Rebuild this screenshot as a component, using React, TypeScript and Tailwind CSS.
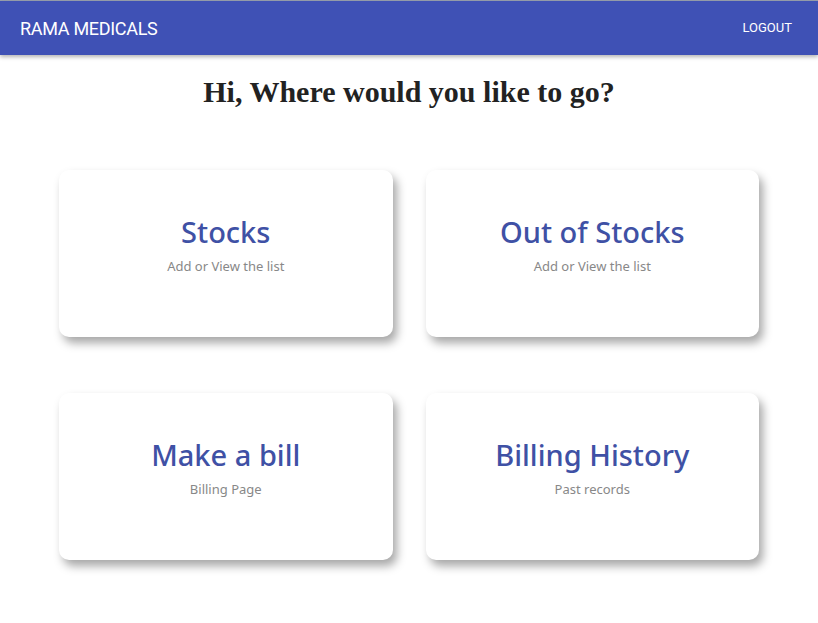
import React from 'react';

const cards = [
  { title: 'Stocks', sub: 'Add or View the list' },
  { title: 'Out of Stocks', sub: 'Add or View the list' },
  { title: 'Make a bill', sub: 'Billing Page' },
  { title: 'Billing History', sub: 'Past records' },
];

export default function App() {
  return (
    <div className="min-h-screen bg-white" style={{ fontFamily: 'Roboto, "Liberation Sans", sans-serif' }}>
      <div className="h-px bg-gray-400" />
      <header className="h-[54px] bg-[#3f51b5] flex items-center justify-between pl-5 pr-[26px] shadow-[0_2px_4px_rgba(0,0,0,0.3)]">
        <span className="text-white text-[18px] tracking-[-0.3px]">RAMA MEDICALS</span>
        <span className="text-white text-[13px]">LOGOUT</span>
      </header>

      <h1
        className="text-center text-[30px] font-bold text-[#222] mt-[18px] leading-[38px]"
        style={{ fontFamily: '"Liberation Serif", serif' }}
      >
        Hi, Where would you like to go?
      </h1>

      <div className="grid grid-cols-2 gap-x-[33px] gap-y-[56px] px-[59px] mt-[59px]">
        {cards.map((c) => (
          <div
            key={c.title}
            className="h-[167px] rounded-[10px] bg-white shadow-[4px_6px_10px_rgba(0,0,0,0.35)] flex flex-col items-center pt-[42px]"
            style={{ fontFamily: '"Noto Sans", "Open Sans", sans-serif' }}
          >
            <div className="text-[29px] leading-[40px] font-medium text-[#3f51a5]">{c.title}</div>
            <div className="text-[13px] leading-[18px] text-[#888] mt-[5px]">{c.sub}</div>
          </div>
        ))}
      </div>
    </div>
  );
}
